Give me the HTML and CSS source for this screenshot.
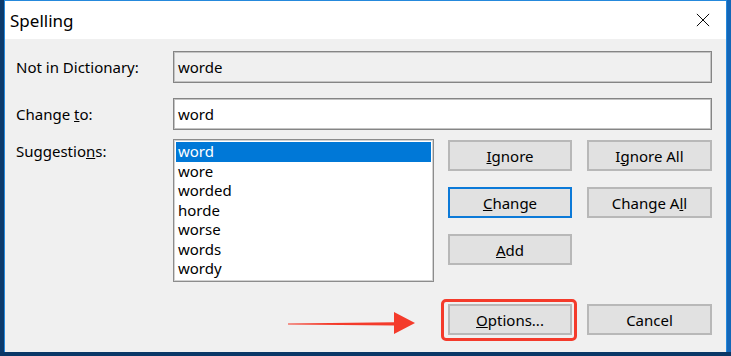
FILE: index.html
```html
<!DOCTYPE html>
<html lang="en">
<head>
<meta charset="utf-8">
<title>Spelling</title>
<link rel="stylesheet" href="styles.css">
</head>
<body>
<div class="screen">
  <div class="strip-left"></div>
  <div class="dialog">
    <div class="titlebar">
      <span class="title">Spelling</span>
      <svg class="close" width="16" height="16" viewBox="0 0 16 16"><path d="M1 1 L15 15 M15 1 L1 15" stroke="#000" stroke-width="1.1" fill="none"/></svg>
    </div>
    <div class="content">
      <div class="row">
        <div class="label">Not in Dictionary:</div>
        <div class="field readonly">worde</div>
      </div>
      <div class="row row2">
        <div class="label">Change <u>t</u>o:</div>
        <div class="field">word</div>
      </div>
      <div class="main">
        <div class="label label-top">Suggestio<u>n</u>s:</div>
        <ul class="list">
          <li class="selected">word</li>
          <li>wore</li>
          <li>worded</li>
          <li>horde</li>
          <li>worse</li>
          <li>words</li>
          <li>wordy</li>
        </ul>
        <div class="buttons">
          <div class="btn"><u>I</u>gnore</div>
          <div class="btn wide">I<u>g</u>nore All</div>
          <div class="btn focus"><u>C</u>hange</div>
          <div class="btn wide">Change A<u>l</u>l</div>
          <div class="btn"><u>A</u>dd</div>
        </div>
      </div>
      <div class="footer">
        <div class="btn highlight">
          <svg class="arrow" width="128" height="24" viewBox="0 0 128 24"><path d="M0 11.6 L106 10.2 L106 0 L127 11 L106 22 L106 13.4 L0 12.4 Z" fill="#f43b2b"/></svg>
          <u>O</u>ptions...
        </div>
        <div class="btn wide">Cancel</div>
      </div>
    </div>
  </div>
  <div class="strip-right"></div>
</div>
</body>
</html>
```
FILE: styles.css
```css
html, body {
  margin: 0;
  padding: 0;
}
body {
  width: 731px;
  height: 356px;
  overflow: hidden;
  background: #0a3766;
  font-family: "Noto Sans", "Open Sans", sans-serif;
  font-size: 15px;
  color: #000;
}
.screen {
  display: flex;
  height: 352px;
}
.strip-left {
  width: 4px;
  background: #0c3a6c;
}
.strip-right {
  flex: 1;
  background: #1467b8;
}
.dialog {
  width: 721px;
  border: 1px solid #2589dc;
  border-bottom: none;
  display: flex;
  flex-direction: column;
  background: #f0f0f0;
}
.titlebar {
  height: 38px;
  background: #fff;
  display: flex;
  align-items: center;
  justify-content: space-between;
  padding: 0 16px 0 5px;
}
.title {
  font-size: 17px;
  margin-top: 1px;
}
.close {
  width: 14px;
  height: 14px;
}
.content {
  flex: 1;
  padding: 12px 14px 0 11px;
}
.row {
  display: flex;
  align-items: center;
}
.row2 {
  margin-top: 15px;
}
.label {
  width: 157px;
  flex: none;
}
.field {
  width: 540px;
  height: 32px;
  box-sizing: border-box;
  border: 1px solid #858585;
  box-shadow: inset 0 0 0 1px #c4c4c4;
  background: #fff;
  padding: 0 4px;
  display: flex;
  align-items: center;
}
.field.readonly {
  background: #f0f0f0;
}
.main {
  display: flex;
  margin-top: 9px;
}
.label-top {
  margin-top: 2px;
}
.list {
  width: 261px;
  height: 143px;
  box-sizing: border-box;
  margin: 0;
  padding: 2px 2px;
  list-style: none;
  border: 1px solid #8c8c8c;
  box-shadow: inset 0 0 0 1px #d2d2d2;
  background: #fff;
}
.list li {
  height: 19.5px;
  line-height: 19px;
  padding-left: 2px;
}
.list li.selected {
  background: #0078d7;
  color: #fff;
}
.buttons {
  margin-left: 14px;
  margin-top: 1px;
  display: grid;
  grid-template-columns: 124px 125px;
  grid-auto-rows: 31px;
  column-gap: 15px;
  row-gap: 16px;
  align-content: start;
}
.btn {
  position: relative;
  width: 124px;
  height: 31px;
  box-sizing: border-box;
  border: 2px solid #b8b8b8;
  background: #e1e1e1;
  display: flex;
  align-items: center;
  justify-content: center;
}
.btn.wide {
  width: 125px;
}
.btn.focus {
  border-color: #0c7ad8;
}
.footer {
  display: flex;
  justify-content: flex-end;
  gap: 15px;
  margin-top: 22px;
}
.highlight::after {
  content: "";
  position: absolute;
  left: -9px;
  top: -7px;
  right: -7px;
  bottom: -8px;
  border: 3px solid #f43b2b;
  border-radius: 5px;
}
.arrow {
  position: absolute;
  left: -162px;
  top: 6px;
}
```
